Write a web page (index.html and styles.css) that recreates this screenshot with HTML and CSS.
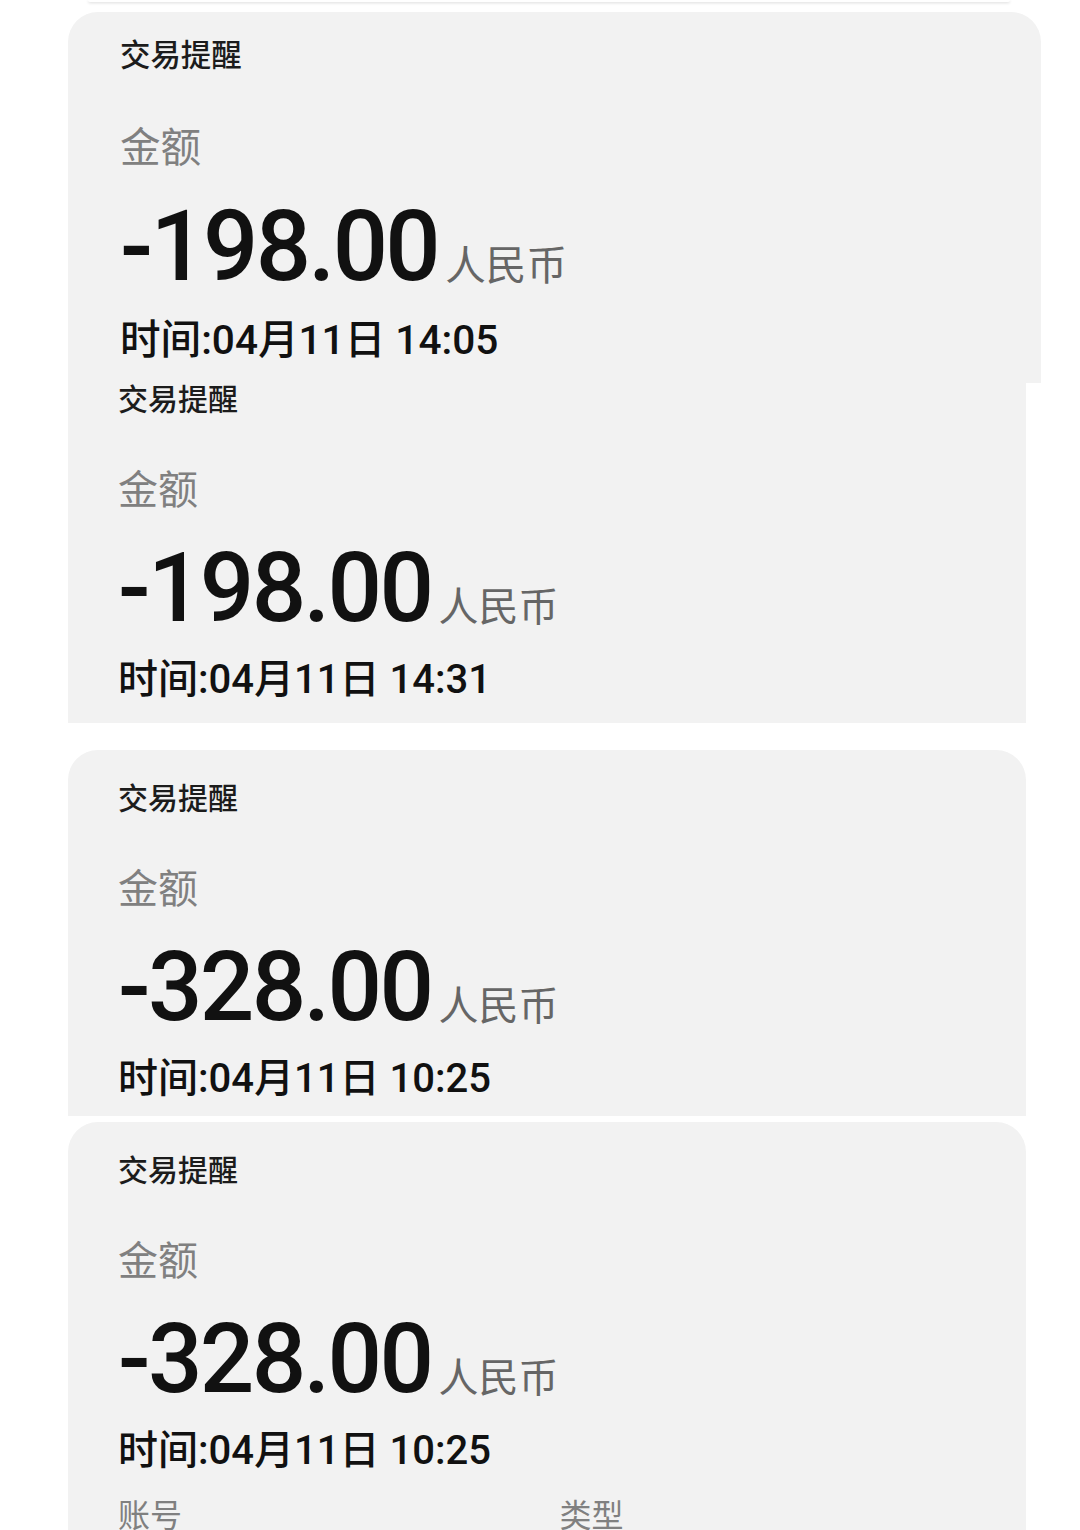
FILE: index.html
```html
<!DOCTYPE html>
<html lang="zh-CN">
<head>
<meta charset="utf-8">
<title>交易提醒</title>
<link rel="stylesheet" href="styles.css">
</head>
<body>
<div class="page">
  <div class="sliver"></div>

  <section class="card card--first">
    <div class="title">交易提醒</div>
    <div class="label">金额</div>
    <div class="amount">-198.00<span class="cur">人民币</span></div>
    <div class="time">时间:04月11日 14:05</div>
  </section>

  <section class="card card--cut">
    <div class="title">交易提醒</div>
    <div class="label">金额</div>
    <div class="amount">-198.00<span class="cur">人民币</span></div>
    <div class="time">时间:04月11日 14:31</div>
  </section>

  <section class="card card--round card--third">
    <div class="title">交易提醒</div>
    <div class="label">金额</div>
    <div class="amount">-328.00<span class="cur">人民币</span></div>
    <div class="time">时间:04月11日 10:25</div>
  </section>

  <section class="card card--round card--fourth">
    <div class="title">交易提醒</div>
    <div class="label">金额</div>
    <div class="amount">-328.00<span class="cur">人民币</span></div>
    <div class="time">时间:04月11日 10:25</div>
    <div class="meta">
      <span>账号</span>
      <span>类型</span>
    </div>
  </section>
</div>
</body>
</html>
```

FILE: styles.css
```css
html, body {
  margin: 0;
  padding: 0;
  background: #ffffff;
}

body {
  font-family: Roboto, "Noto Sans CJK SC", sans-serif;
}

.page {
  height: 1530px;
  overflow: hidden;
  display: flex;
  flex-direction: column;
}

.sliver {
  flex: none;
  margin-left: 88px;
  width: 922px;
  height: 2px;
  background: #ffffff;
  border-radius: 0 0 4px 4px;
  box-shadow: 0 1px 3px rgba(0, 0, 0, 0.16);
}

.card {
  flex: none;
  box-sizing: border-box;
  margin-left: 68px;
  width: 958px;
  padding-left: 50px;
  background: #f2f2f2;
  overflow: hidden;
  font-size: 40px;
  color: #141414;
}

.card--first {
  margin-top: 10px;
  width: 973px;
  height: 371px;
  padding-left: 52px;
  padding-top: 29px;
  border-radius: 30px 30px 0 0;
  font-size: 40.6px;
}

.card--cut {
  height: 340px;
  padding-top: 2px;
}

.card--round {
  border-radius: 30px 30px 0 0;
  padding-top: 34px;
}

.card--third {
  margin-top: 27px;
  height: 366px;
}

.card--fourth {
  margin-top: 6px;
  flex: 1 0 auto;
}

.title {
  font-size: 0.75em;
  line-height: 1em;
  font-weight: 500;
  color: #1c1c1c;
}

.label {
  margin-top: 1.28em;
  font-size: 1em;
  line-height: 1.25em;
  color: #808080;
}

.amount {
  margin-top: 0.25em;
  font-size: 2.4em;
  line-height: 1;
  font-weight: 500;
  letter-spacing: -0.028em;
  color: #111111;
  white-space: nowrap;
}

.cur {
  margin-left: 0.18em;
  font-size: 0.4167em;
  line-height: 1;
  font-weight: 400;
  letter-spacing: 0;
  color: #666666;
}

.time {
  margin-top: 0.48em;
  font-size: 1em;
  line-height: 1.25em;
  font-weight: 500;
  color: #111111;
  white-space: nowrap;
}

.meta {
  margin-top: 0.6em;
  display: grid;
  grid-template-columns: 13.8em 1fr;
  font-size: 0.8em;
  line-height: 1.25em;
  color: #808080;
}
```
